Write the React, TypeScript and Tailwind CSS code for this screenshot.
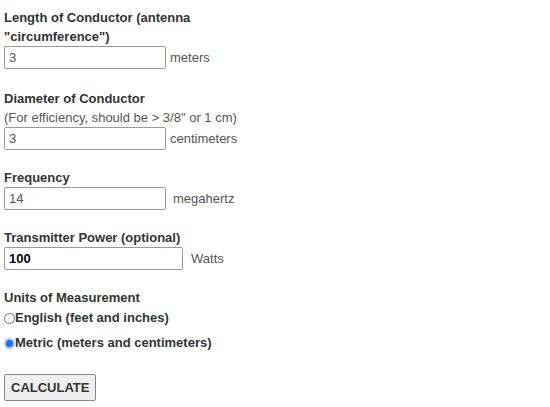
import { ReactNode } from "react"

function Field({ label, note, value, unit, bold, wide, unitGap }: {
  label: ReactNode
  note?: string
  value: string
  unit: string
  bold?: boolean
  wide?: boolean
  unitGap: string
}) {
  return (
    <div>
      <div className="font-bold text-[#333] leading-[19px]">{label}</div>
      {note && <div className="text-[#555] leading-[19px]">{note}</div>}
      <div className="flex items-center">
        <input
          readOnly
          value={value}
          className={`h-[23px] ${wide ? "w-[179px]" : "w-[162px]"} border border-[#999] rounded-[2px] px-[4px] outline-none ${bold ? "font-bold text-black" : "text-[#555]"}`}
        />
        <span className={`${unitGap} text-[#555]`}>{unit}</span>
      </div>
    </div>
  )
}

function Radio({ checked, children }: { checked?: boolean; children: ReactNode }) {
  return (
    <div className="flex items-center h-[22px] font-bold text-[#333]">
      {checked ? (
        <span className="w-[11px] h-[11px] rounded-full bg-[#1a73e8] border-[2px] border-[#a8c8f8] shrink-0" />
      ) : (
        <span className="w-[11px] h-[11px] rounded-full border border-[#777] bg-white shrink-0" />
      )}
      <span>{children}</span>
    </div>
  )
}

function App() {
  return (
    <div className="bg-white min-h-[407px] px-[4px] pt-[8px] text-[13px]" style={{ fontFamily: '"Liberation Sans", Arial, sans-serif' }}>
      <div className="flex flex-col gap-[18px]">
        <Field
          label={<>Length of Conductor (antenna<br />"circumference")</>}
          value="3"
          unit="meters"
          unitGap="ml-[4px]"
        />
        <div className="mt-[2px]">
          <Field
            label="Diameter of Conductor"
            note={'(For efficiency, should be > 3/8" or 1 cm)'}
            value="3"
            unit="centimeters"
            unitGap="ml-[4px]"
          />
        </div>
        <Field label="Frequency" value="14" unit="megahertz" unitGap="ml-[7px]" />
        <Field label="Transmitter Power (optional)" value="100" unit="Watts" bold wide unitGap="ml-[8px]" />
        <div>
          <div className="font-bold text-[#333] leading-[19px]">Units of Measurement</div>
          <Radio>English (feet and inches)</Radio>
          <div className="mt-[3px]">
            <Radio checked>Metric (meters and centimeters)</Radio>
          </div>
        </div>
      </div>
      <button className="mt-[20px] h-[27px] px-[6px] border border-[#888] rounded-[2px] bg-[#efefef] font-bold text-[#333]">
        CALCULATE
      </button>
    </div>
  )
}

export default App
